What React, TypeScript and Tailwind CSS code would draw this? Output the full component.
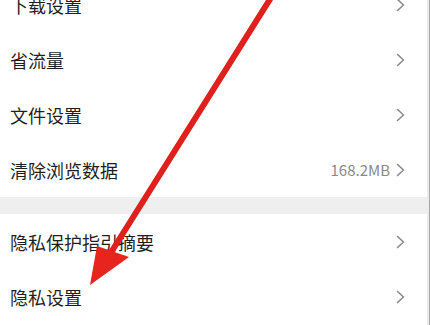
const font = { fontFamily: '"Noto Sans CJK SC", "Noto Sans", sans-serif' };

function Chevron() {
  return (
    <svg width="9" height="14" viewBox="0 0 9 14" className="shrink-0">
      <polyline points="1.5,1.5 7.5,7 1.5,12.5" fill="none" stroke="#8a8a8a" strokeWidth="1.6" strokeLinejoin="round" strokeLinecap="round" />
    </svg>
  );
}

function Row({ label, value }: { label: string; value?: string }) {
  return (
    <div className="h-[55px] flex items-center justify-between pl-[10px] pr-[22px]">
      <span className="text-[18px] text-[#1f1f1f] leading-none">{label}</span>
      <div className="flex items-center gap-[6px]">
        {value && <span className="text-[15px] text-[#8a8a8a] leading-none">{value}</span>}
        <Chevron />
      </div>
    </div>
  );
}

export default function App() {
  return (
    <div className="relative w-[430px] h-[325px] overflow-hidden bg-white flex" style={font}>
      <div className="flex-1 flex flex-col -mt-[23px]">
        <Row label="下载设置" />
        <Row label="省流量" />
        <Row label="文件设置" />
        <Row label="清除浏览数据" value="168.2MB" />
        <div className="h-[17px] bg-[#efefef]" />
        <Row label="隐私保护指引摘要" />
        <Row label="隐私设置" />
      </div>
      <div className="w-[2px] bg-[#ececec]" />
      <div className="w-[1px] bg-[#a8a8a8]" />

      {/* red annotation arrow */}
      <svg className="absolute inset-0 pointer-events-none" width="430" height="325" viewBox="0 0 430 325">
        <line x1="272" y1="-4" x2="110" y2="254" stroke="#e0201c" strokeWidth="6" strokeLinecap="round" />
        <polygon points="90,285 97,246 129,257" fill="#e8241e" />
      </svg>
    </div>
  );
}
